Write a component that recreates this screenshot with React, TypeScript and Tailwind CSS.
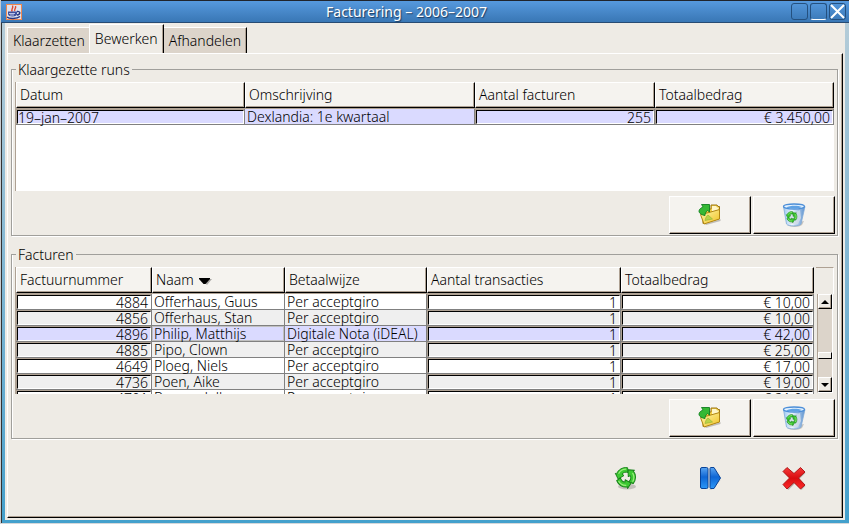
import React from 'react';

type Align = 'left' | 'right';
type Column = { label: string; width: string; numeric?: boolean; sorted?: boolean };

const runColumns: Column[] = [
  { label: 'Datum', width: 'w-[229px]', numeric: true },
  { label: 'Omschrijving', width: 'w-[230px]' },
  { label: 'Aantal facturen', width: 'w-[180px]', numeric: true },
  { label: 'Totaalbedrag', width: 'w-[179px]', numeric: true },
];

const invoiceColumns: Column[] = [
  { label: 'Factuurnummer', width: 'w-[136px]', numeric: true },
  { label: 'Naam', width: 'w-[133px]', sorted: true },
  { label: 'Betaalwijze', width: 'w-[142px]' },
  { label: 'Aantal transacties', width: 'w-[194px]', numeric: true },
  { label: 'Totaalbedrag', width: 'w-[193px]', numeric: true },
];

const runs = [['19–jan–2007', 'Dexlandia: 1e kwartaal', '255', '€ 3.450,00']];

const invoices = [
  ['4884', 'Offerhaus, Guus', 'Per acceptgiro', '1', '€ 10,00'],
  ['4856', 'Offerhaus, Stan', 'Per acceptgiro', '1', '€ 10,00'],
  ['4896', 'Philip, Matthijs', 'Digitale Nota (iDEAL)', '1', '€ 42,00'],
  ['4885', 'Pipo, Clown', 'Per acceptgiro', '1', '€ 25,00'],
  ['4649', 'Ploeg, Niels', 'Per acceptgiro', '1', '€ 17,00'],
  ['4736', 'Poen, Aike', 'Per acceptgiro', '1', '€ 19,00'],
  ['4701', 'Bosma, Jelle', 'Per acceptgiro', '1', '€ 21,00'],
];

function JavaIcon() {
  return (
    <svg width="16" height="16" viewBox="0 0 16 16" className="shrink-0" aria-hidden="true">
      <rect x="0.5" y="0.5" width="15" height="15" fill="#dfe3ee" stroke="#f08850" />
      <path d="M6.500 7.500C4 5.500 8 4.500 6.500 1.500M9 7C7.500 5.500 10.500 4.500 9.500 2" fill="none" stroke="#e04a30" strokeWidth="1.400" />
      <path d="M2 7.500h9v2.500c0 1.500-1.500 2.500-4.500 2.500S2 11.500 2 10Z" fill="#3f4f9c" />
      <path d="M11 7.500c4-.5 3.500 3 0 3.500M1 13c2 2 10 2 13-.5" fill="none" stroke="#26357f" strokeWidth="1.400" />
      <path d="M3 9.500h6M4 11h4" stroke="#b9c4ea" />
    </svg>
  );
}

function FolderIcon() {
  return (
    <svg width="26" height="26" viewBox="0 0 26 26" aria-hidden="true">
      <defs>
        <linearGradient id="folder" x1="0" y1="0" x2="1" y2="1">
          <stop offset="0" stopColor="#fff9b0" />
          <stop offset="1" stopColor="#f0c020" />
        </linearGradient>
      </defs>
      <path d="M8 22 21 18l2.500-1V19L9 23Z" fill="#000" opacity=".22" />
      <path d="M6 7h8V3h6l1 1.500h1.500v12L6 21.500Z" fill="#f3cf45" stroke="#9a7412" />
      <path d="M15 4h4l1 1.500h1.500v4L15 11Z" fill="#fff6c8" />
      <path d="m3.500 12.500 3.500 9.500L22.500 17V7.500L12 10.500Z" fill="url(#folder)" stroke="#b08512" />
      <path d="M8 18.500c1-4 2-5 3-5.500l4.500 4Z" fill="#b9d348" stroke="#8fb030" strokeWidth=".6" />
      <path d="M4.500 2.500h8V10l-2-1.500C8.500 10 8 12 8 13.500 5 13 2 11.500 2 9c.3-2 2-3 4-4.200Z" fill="#35b934" stroke="#117f20" strokeWidth=".9" />
    </svg>
  );
}

function RecycleArrows() {
  return (
    <g strokeLinejoin="round">
      {[0, 120, 240].map((angle) => (
        <g key={angle} transform={`rotate(${angle} 12 12)`}>
          <path
            d="M1.600 8.500C3.500 3.500 8.500.5 14 1.400L14.500 6.600C11.500 5.800 9.300 6.600 7.800 8.500L10 10 3.500 14 .3 7.500Z"
            fill="#3cc832"
            stroke="#137d15"
            strokeWidth="1"
          />
          <path d="M4 8C5.700 4.700 8.800 2.900 12.500 3" fill="none" stroke="#9aee7c" strokeWidth="1.300" />
        </g>
      ))}
    </g>
  );
}

function TrashIcon() {
  return (
    <svg width="26" height="26" viewBox="0 0 26 26" aria-hidden="true">
      <defs>
        <linearGradient id="bin" x1="0" y1="0" x2="1" y2="0">
          <stop offset="0" stopColor="#9fcaf2" />
          <stop offset=".4" stopColor="#eef6fd" />
          <stop offset="1" stopColor="#5b91cf" />
        </linearGradient>
      </defs>
      <path d="M6 23c3 2.500 12 2.500 15 0l2-4-15 3Z" fill="#000" opacity=".2" />
      <path d="M2.500 4.500 5.500 22c1.500 2.500 13 2.500 14.500 0l4-17.500Z" fill="url(#bin)" stroke="#82abd8" strokeWidth=".8" />
      <path d="m8 8 5 3 6-3 1 8-3 6H8Z" fill="#d3dde8" opacity=".8" />
      <ellipse cx="13" cy="4.500" rx="10.500" ry="2.500" fill="#e8f4ff" stroke="#4d8fd8" strokeWidth="1.300" />
      <path d="M5 5.500c4-2 11-2.500 16-.5-4 2-12 2-16 .5Z" fill="#5fa2e4" />
      <g transform="translate(5 9) scale(.48)">
        <RecycleArrows />
      </g>
    </svg>
  );
}

function RefreshIcon() {
  return (
    <svg width="26" height="26" viewBox="0 0 26 26" aria-hidden="true">
      <ellipse cx="14" cy="21.500" rx="9" ry="3" fill="#000" opacity=".18" />
      <g transform="translate(2 1.500) scale(.9)">
        <RecycleArrows />
      </g>
    </svg>
  );
}

function ForwardIcon() {
  return (
    <svg width="26" height="26" viewBox="0 0 26 26" aria-hidden="true">
      <defs>
        <linearGradient id="forward" x1="0" y1="0" x2="0" y2="1">
          <stop offset="0" stopColor="#5aa5f2" />
          <stop offset=".45" stopColor="#0f66d4" />
          <stop offset="1" stopColor="#2b97f8" />
        </linearGradient>
      </defs>
      <path d="M4 24.500h8l12-10-9 10H4Z" fill="#000" opacity=".2" />
      <rect x="3.500" y="2.500" width="7.500" height="21" rx="1.500" fill="url(#forward)" stroke="#084398" />
      <path d="M13 3.500q0-1 1-1h3L23.500 13 17 23.500h-3q-1 0-1-1Z" fill="url(#forward)" stroke="#084398" />
    </svg>
  );
}

function CloseIcon() {
  return (
    <svg width="26" height="26" viewBox="0 0 26 26" aria-hidden="true">
      <defs>
        <linearGradient id="cross" x1="0" y1="0" x2="0" y2="1">
          <stop offset="0" stopColor="#f63a3a" />
          <stop offset=".5" stopColor="#d90d10" />
          <stop offset="1" stopColor="#ff2a2a" />
        </linearGradient>
      </defs>
      <path d="m7.500 4 6.500 6.500 6.500-6.500 4 4-6.500 6.500 6.500 6.500-4 4-6.500-6.500-6.500 6.500-4-4 6.500-6.500-6.500-6.500Z" fill="#000" opacity=".22" />
      <path d="m6 2.500 7 6 6.500-6 4.500 4.500L17.500 13l6.500 7-4.500 4-6.500-6.500-7 6.500-4-4.500L8.500 13 2 6.500Z" fill="url(#cross)" stroke="#a80d0d" strokeWidth=".9" strokeLinejoin="round" />
    </svg>
  );
}

function HeaderRow({ columns }: { columns: Column[] }) {
  return (
    <thead>
      <tr>
        {columns.map((column) => (
          <th key={column.label} className={`${column.width} h-[27px] border-b border-[#aea193] p-0 text-left font-light`}>
            <div className="h-[26px] border-t border-r border-b border-l border-t-white border-r-black border-b-black border-l-white">
              <div className="flex h-6 items-center gap-1 border-r border-b border-[#aea193] bg-[#f5f3ef] pt-px pl-[3px]">
                {column.label}
                {column.sorted && (
                  <svg width="14" height="9" viewBox="0 0 14 9" aria-hidden="true">
                    <path d="M3 3h11L9 9Z" fill="#000" opacity=".3" />
                    <path d="M1 2h11v1L7.500 8h-2L1 3Z" fill="#000" />
                  </svg>
                )}
              </div>
            </div>
          </th>
        ))}
      </tr>
    </thead>
  );
}

function Cell({ text, numeric, align, fill, focused }: { text: string; numeric?: boolean; align: Align; fill: string; focused?: boolean }) {
  if (numeric) {
    return (
      <td className="h-4 border-r border-b border-[#808080] p-0">
        <div className="h-[15px] border-t border-l border-[#aea193]">
          <div
            className={`h-[14px] border-t border-r border-b border-l border-t-black border-r-white border-b-white border-l-black leading-[14px] whitespace-nowrap ${fill} ${align === 'right' ? 'pr-[2px] text-right' : 'text-left'}`}
          >
            {text}
          </div>
        </div>
      </td>
    );
  }
  return (
    <td className={`h-4 border-r border-b border-[#808080] p-0 ${fill}`}>
      <div className={`h-[15px] border pl-px leading-[14px] whitespace-nowrap ${focused ? 'border-[#c0c0c0]' : 'border-transparent'}`}>{text}</div>
    </td>
  );
}

function DataTable({ columns, rows, selected, focusColumn, label }: { columns: Column[]; rows: string[][]; selected: number; focusColumn?: number; label: string }) {
  return (
    <table aria-label={label} className="w-full table-fixed border-separate border-spacing-0">
      <HeaderRow columns={columns} />
      <tbody>
        {rows.map((row, r) => (
          <tr key={row[0]}>
            {row.map((text, c) => (
              <Cell
                key={c}
                text={text}
                numeric={columns[c].numeric}
                align={columns[c].label === 'Datum' ? 'left' : 'right'}
                fill={r === selected ? 'bg-[#dadaff]' : r % 2 ? 'bg-[#efefef]' : 'bg-white'}
                focused={r === selected && c === focusColumn}
              />
            ))}
          </tr>
        ))}
      </tbody>
    </table>
  );
}

function Group({ title, children }: { title: string; children: React.ReactNode }) {
  return (
    <fieldset className="min-w-0 border border-[#a09f9b] pr-[2px] pb-px pl-[3px] shadow-[1px_1px_0_#fff,inset_1px_0_0_#fff]">
      <legend className="ml-px h-4 px-[2px] leading-[18px]">{title}</legend>
      {children}
    </fieldset>
  );
}

function RaisedButton({ label, children }: { label: string; children: React.ReactNode }) {
  return (
    <button
      type="button"
      aria-label={label}
      className="flex h-[38px] w-[82px] items-center justify-center border-t border-r border-b border-l border-t-white border-r-black border-b-black border-l-white bg-[#f5f3ef] shadow-[inset_-1px_-1px_0_#aea193]"
    >
      {children}
    </button>
  );
}

function FlatButton({ label, children }: { label: string; children: React.ReactNode }) {
  return (
    <button type="button" aria-label={label} className="flex h-[38px] w-[82px] items-center justify-center">
      {children}
    </button>
  );
}

function GroupButtons({ subject }: { subject: string }) {
  return (
    <div className="mt-[5px] flex justify-end gap-[2px]">
      <RaisedButton label={`${subject} openen`}>
        <FolderIcon />
      </RaisedButton>
      <RaisedButton label={`${subject} verwijderen`}>
        <TrashIcon />
      </RaisedButton>
    </div>
  );
}

function ScrollArrow({ down }: { down?: boolean }) {
  return (
    <button
      type="button"
      aria-label={down ? 'Omlaag' : 'Omhoog'}
      className="flex h-[15px] w-full items-center justify-center border-t border-r border-b border-l border-t-white border-r-black border-b-black border-l-white bg-[#eeebe5] shadow-[inset_-1px_-1px_0_#aea193]"
    >
      <svg width="8" height="4" viewBox="0 0 8 4" aria-hidden="true">
        <path d={down ? 'M0 0h8L4 4Z' : 'M0 4h8L4 0Z'} fill="#000" />
      </svg>
    </button>
  );
}

function Tab({ label, active }: { label: string; active?: boolean }) {
  return (
    <button
      type="button"
      role="tab"
      aria-selected={!!active}
      className={
        active
          ? '-mb-px h-[30px] border-t border-r border-l border-t-white border-r-black border-l-white bg-[#eeebe5] px-[5px] pb-px shadow-[inset_-1px_0_0_#aea193]'
          : label === 'Klaarzetten'
            ? 'h-[26px] border-t border-l border-white bg-[#dcd4ca] pr-1 pl-[5px]'
            : 'h-[26px] border-t border-r border-t-white border-r-black bg-[#dcd4ca] px-[5px] shadow-[inset_-1px_0_0_#aea193]'
      }
    >
      {label}
    </button>
  );
}

export default function App() {
  return (
    <div className="flex min-h-screen w-full flex-col border-b border-l border-b-[#d5d8da] border-l-[#c8ccd0] bg-[#eeebe5] font-['Noto_Sans','Open_Sans',sans-serif] text-[14px] leading-4 font-light text-black">
      <header className="flex h-[23px] items-center border-t border-b border-t-[#20242c] border-b-[#274b73] bg-linear-to-b from-[#5699de] to-[#3977b5] pr-[3px] pl-[5px]">
        <JavaIcon />
        <h1 className="flex-1 text-center font-normal text-white [text-shadow:1px_1px_1px_#1c3c60]">Facturering – 2006–2007</h1>
        <div className="flex gap-[2px]">
          <button type="button" aria-label="Minimaliseren" className="size-[17px] rounded-[3px] border border-[#24507f]" />
          <button type="button" aria-label="Maximaliseren" className="size-[17px] rounded-[3px] border border-[#24507f] border-b-white" />
          <button type="button" aria-label="Sluiten" className="size-[17px] rounded-[3px] border border-[#24507f]">
            <svg width="15" height="15" viewBox="0 0 15 15" aria-hidden="true">
              <path d="m1 1 13 13M14 1 1 14" stroke="#fff" strokeWidth="2" />
            </svg>
          </button>
        </div>
      </header>

      <div className="flex flex-1 border-l border-[#333] bg-linear-to-b from-[#b4ccd8] to-[#43a0cc] pr-[4px] pb-[3px] pl-[3px]">
        <main className="flex min-w-0 flex-1 flex-col bg-[#eeebe5] px-[2px] pt-px pb-[2px]">
          <div role="tablist" className="flex items-end">
            <Tab label="Klaarzetten" />
            <Tab label="Bewerken" active />
            <Tab label="Afhandelen" />
          </div>
          <div
            role="tabpanel"
            className="flex flex-1 flex-col border-t border-r border-b border-l border-t-white border-r-black border-b-black border-l-white pt-[7px] pr-1 pb-[18px] pl-[3px] shadow-[inset_-1px_-1px_0_#aea193]"
          >
            <Group title="Klaargezette runs">
              <div className="mt-[5px] mr-px h-[109px] border-l border-[#aea193] bg-white">
                <DataTable label="Klaargezette runs" columns={runColumns} rows={runs} selected={0} />
              </div>
              <GroupButtons subject="Run" />
            </Group>
            <div className="h-[10px]" />
            <Group title="Facturen">
              <div className="mt-[5px] flex h-[127px] border-l border-[#aea193]">
                <div className="min-w-0 flex-1 overflow-hidden">
                  <DataTable label="Facturen" columns={invoiceColumns} rows={invoices} selected={2} focusColumn={1} />
                </div>
                <div className="flex w-[21px] flex-col pr-[2px] pb-px pl-[3px]">
                  <div className="-mx-px h-[27px] border-t border-r border-t-[#aea193] border-r-white" />
                  <div className="flex flex-1 flex-col border-r border-b border-l border-r-white border-b-white border-l-[#aea193] bg-[#dcd4ca]">
                    <ScrollArrow />
                    <div className="flex flex-1 flex-col justify-end pb-[18px]">
                      <div className="h-[7px] border-t border-r border-b border-l border-t-white border-r-black border-b-black border-l-white bg-[#eeebe5]" />
                    </div>
                    <ScrollArrow down />
                  </div>
                </div>
              </div>
              <GroupButtons subject="Factuur" />
            </Group>
            <div className="mt-5 flex justify-end gap-[2px] pr-[3px]">
              <FlatButton label="Vernieuwen">
                <RefreshIcon />
              </FlatButton>
              <FlatButton label="Doorgaan">
                <ForwardIcon />
              </FlatButton>
              <FlatButton label="Annuleren">
                <CloseIcon />
              </FlatButton>
            </div>
          </div>
        </main>
      </div>
    </div>
  );
}
